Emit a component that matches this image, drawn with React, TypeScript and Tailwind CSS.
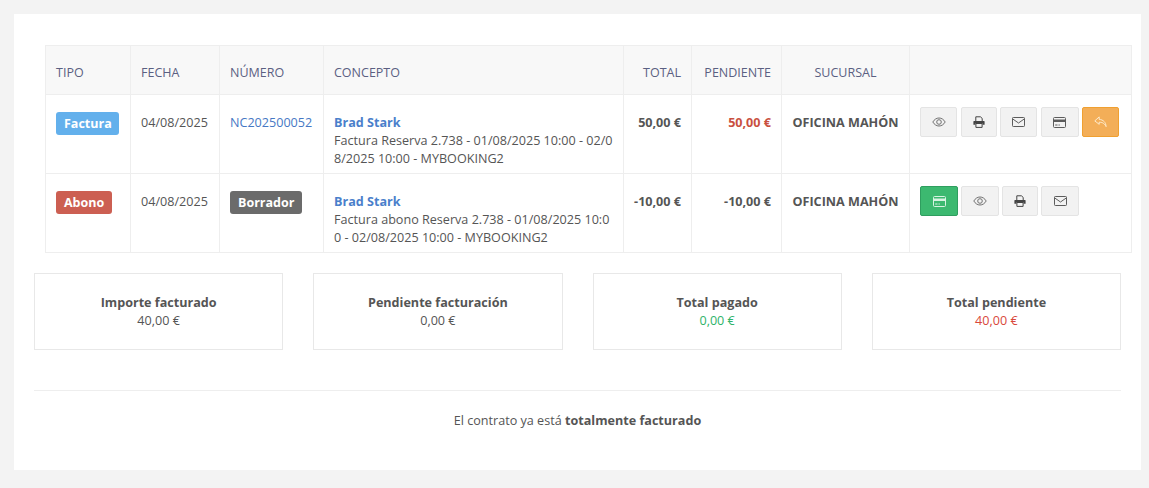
import React from "react";

const cellBase = "border border-[#eeeeee] align-top px-[10px]";
const headCell =
  "border border-[#eeeeee] bg-[#f8f8f8] px-[10px] pt-[6px] h-[49px] font-normal text-[#5b6082] text-[12.5px]";
const badge = "inline-block h-[23px] rounded-[3px] px-[8px] text-[12.5px] font-bold leading-[23px] text-white";

const btnBase = "flex h-[30px] items-center justify-center rounded-[2px] border border-[#e4e4e4] bg-[#f2f2f2]";

const EyeIcon = () => (
  <svg width="14" height="10" viewBox="0 0 14 10" fill="none" stroke="#707070" strokeWidth="1">
    <path d="M.8 5C2.4 2.4 4.5 1 7 1s4.600 1.400 6.200 4C11.600 7.600 9.500 9 7 9S2.400 7.600.8 5z" />
    <circle cx="7" cy="5" r="2.300" />
  </svg>
);

const PrinterIcon = () => (
  <svg width="12" height="12" viewBox="0 0 12 12" fill="none">
    <path d="M2.800 5V.8h4.600L9.200 2.400V5" stroke="#444" strokeWidth="1" />
    <path d="M1 5h10a.6.6 0 0 1 .6.6v3.200H9.600V7.400H2.400v1.400H.4V5.600A.6.6 0 0 1 1 5z" fill="#444" />
    <path d="M2.900 7.500h6.200v3.900H2.900z" stroke="#444" strokeWidth="1" />
  </svg>
);

const MailIcon = () => (
  <svg width="13" height="10" viewBox="0 0 13 10" fill="none" stroke="#5c5c5c" strokeWidth="1">
    <rect x="0.5" y="0.5" width="12" height="9" rx="0.8" />
    <path d="M.8 2l5.700 4 5.700-4" />
  </svg>
);

const CardIcon = ({ color = "#5c5c5c" }: { color?: string }) => (
  <svg width="13" height="11" viewBox="0 0 13 11" fill="none">
    <rect x="0.5" y="0.5" width="12" height="10" rx="1" stroke={color} strokeWidth="1" />
    <rect x="0.5" y="2.500" width="12" height="2.500" fill={color} />
    <path d="M2.200 8h2.300M5.500 8h1.300" stroke={color} strokeWidth="1" />
  </svg>
);

const ReplyIcon = () => (
  <svg width="13" height="12" viewBox="0 0 13 12" fill="none">
    <path
      d="M5.200.9.800 4.900l4.400 3.400V6.200c2.800 0 4.900.7 6.900 4.400-.3-4.300-2.700-6.900-6.900-7.200z"
      stroke="#fdeacb"
      strokeWidth="1"
      strokeLinejoin="round"
    />
  </svg>
);

const ActionButton = ({ width, children, className }: { width: string; children: React.ReactNode; className?: string }) => (
  <div className={`${btnBase} ${width} ${className ?? ""}`}>{children}</div>
);

const Summary = ({ title, value, color }: { title: string; value: string; color?: string }) => (
  <div className="flex h-[77px] flex-col items-center justify-center border border-[#e8e8e8] pt-[1px] leading-[18px]">
    <span className="font-bold">{title}</span>
    <span className={color}>{value}</span>
  </div>
);

export default function App() {
  return (
    <div
      className="min-h-[488px] bg-[#f3f3f3] pb-[18px] pl-[14px] pr-[8px] pt-[14px] text-[12.6px] text-[#555555]"
      style={{ fontFamily: '"Open Sans", "Noto Sans", sans-serif' }}
    >
      <div className="h-[456px] bg-white pt-[31px]">
        <div className="pl-[31px]">
          <table className="w-[1086px] table-fixed border-collapse text-left">
            <colgroup>
              <col className="w-[85px]" />
              <col className="w-[89px]" />
              <col className="w-[104px]" />
              <col className="w-[300px]" />
              <col className="w-[68px]" />
              <col className="w-[90px]" />
              <col className="w-[128px]" />
              <col className="w-[222px]" />
            </colgroup>
            <thead>
              <tr>
                <th className={headCell}>TIPO</th>
                <th className={headCell}>FECHA</th>
                <th className={headCell}>NÚMERO</th>
                <th className={headCell}>CONCEPTO</th>
                <th className={`${headCell} text-right`}>TOTAL</th>
                <th className={`${headCell} text-right`}>PENDIENTE</th>
                <th className={`${headCell} text-center`}>SUCURSAL</th>
                <th className={headCell}></th>
              </tr>
            </thead>
            <tbody className="leading-[18px]">
              <tr className="h-[79px]">
                <td className={`${cellBase} pt-[17px]`}>
                  <span className={`${badge} bg-[#63b0ec] !pr-[7px]`}>Factura</span>
                </td>
                <td className={`${cellBase} pt-[19px]`}>04/08/2025</td>
                <td className={`${cellBase} pt-[19px] text-[#4678c4]`}>NC202500052</td>
                <td className={`${cellBase} pt-[19px]`}>
                  <div className="font-bold text-[#4a7fcb]">Brad Stark</div>
                  <div className="break-all">Factura Reserva 2.738 - 01/08/2025 10:00 - 02/08/2025 10:00 - MYBOOKING2</div>
                </td>
                <td className={`${cellBase} pt-[19px] text-right font-bold`}>50,00 €</td>
                <td className={`${cellBase} pt-[19px] text-right font-bold text-[#c9503f]`}>50,00 €</td>
                <td className={`${cellBase} pt-[19px] text-center font-bold`}>OFICINA MAHÓN</td>
                <td className={`${cellBase} pt-[12px]`}>
                  <div className="flex gap-[3.5px]">
                    <ActionButton width="w-[37px]"><EyeIcon /></ActionButton>
                    <ActionButton width="w-[36px]"><PrinterIcon /></ActionButton>
                    <ActionButton width="w-[37px]"><MailIcon /></ActionButton>
                    <ActionButton width="w-[38px]"><CardIcon /></ActionButton>
                    <ActionButton width="w-[37px]" className="!border-[#f0a030] !bg-[#f3ae58]"><ReplyIcon /></ActionButton>
                  </div>
                </td>
              </tr>
              <tr className="h-[79px]">
                <td className={`${cellBase} pt-[17px]`}>
                  <span className={`${badge} bg-[#cc5f52]`}>Abono</span>
                </td>
                <td className={`${cellBase} pt-[19px]`}>04/08/2025</td>
                <td className={`${cellBase} pt-[17px]`}>
                  <span className={`${badge} bg-[#6b6b6b]`}>Borrador</span>
                </td>
                <td className={`${cellBase} pt-[19px]`}>
                  <div className="font-bold text-[#4a7fcb]">Brad Stark</div>
                  <div className="break-all">Factura abono Reserva 2.738 - 01/08/2025 10:00 - 02/08/2025 10:00 - MYBOOKING2</div>
                </td>
                <td className={`${cellBase} pt-[19px] text-right font-bold`}>-10,00 €</td>
                <td className={`${cellBase} pt-[19px] text-right font-bold`}>-10,00 €</td>
                <td className={`${cellBase} pt-[19px] text-center font-bold`}>OFICINA MAHÓN</td>
                <td className={`${cellBase} pt-[12px]`}>
                  <div className="flex gap-[3px]">
                    <ActionButton width="w-[38px]" className="!border-[#2f9e5f] !bg-[#3cb970]"><CardIcon color="#d8f3e2" /></ActionButton>
                    <ActionButton width="w-[38px]"><EyeIcon /></ActionButton>
                    <ActionButton width="w-[36px]"><PrinterIcon /></ActionButton>
                    <ActionButton width="w-[38px]"><MailIcon /></ActionButton>
                  </div>
                </td>
              </tr>
            </tbody>
          </table>
        </div>

        <div className="ml-[20px] mt-[20px] grid w-[1087px] grid-cols-4 gap-[30px]">
          <Summary title="Importe facturado" value="40,00 €" />
          <Summary title="Pendiente facturación" value="0,00 €" />
          <Summary title="Total pagado" value="0,00 €" color="text-[#2fb36a]" />
          <Summary title="Total pendiente" value="40,00 €" color="text-[#d9483b]" />
        </div>

        <div className="ml-[20px] mr-[20px] mt-[40px] border-t border-[#eeeeee] pt-[21px] text-center leading-[18px]">
          El contrato ya está <b>totalmente facturado</b>
        </div>
      </div>
    </div>
  );
}
